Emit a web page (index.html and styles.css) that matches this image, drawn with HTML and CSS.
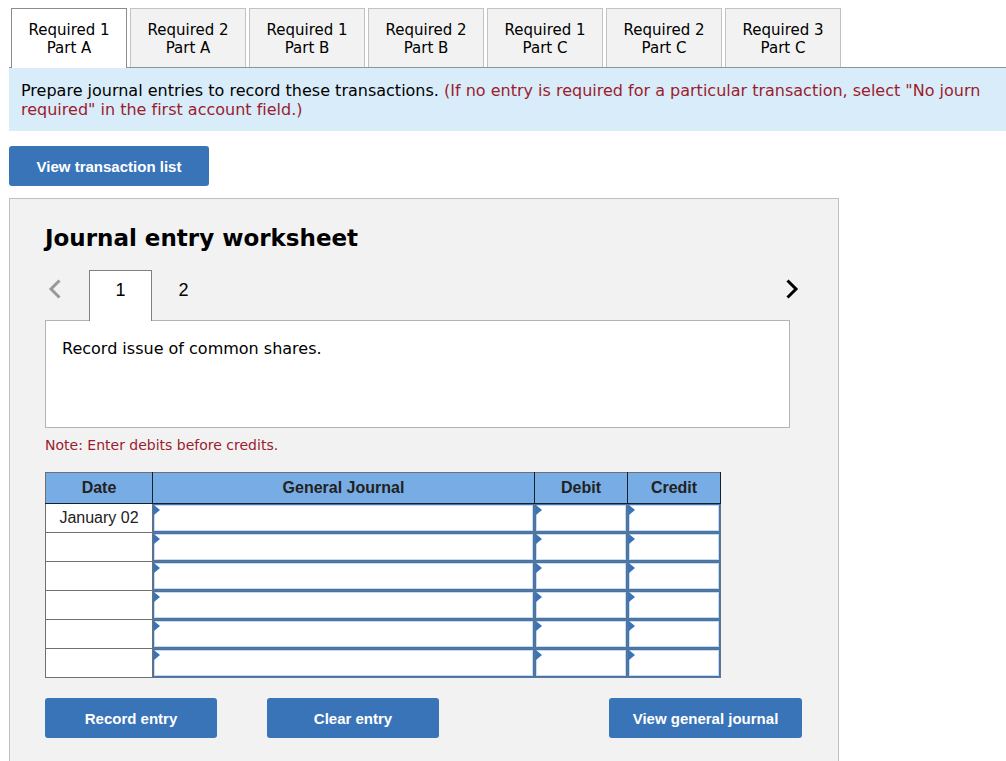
FILE: index.html
```html
<!DOCTYPE html>
<html lang="en">
<head>
<meta charset="utf-8">
<title>Journal entry worksheet</title>
<link rel="stylesheet" href="styles.css">
</head>
<body>
<nav class="tabs" role="tablist" aria-label="Requirements">
  <button class="tab tab-active" role="tab" aria-selected="true">Required 1<br>Part A</button>
  <button class="tab" role="tab" aria-selected="false">Required 2<br>Part A</button>
  <button class="tab" role="tab" aria-selected="false">Required 1<br>Part B</button>
  <button class="tab" role="tab" aria-selected="false">Required 2<br>Part B</button>
  <button class="tab" role="tab" aria-selected="false">Required 1<br>Part C</button>
  <button class="tab" role="tab" aria-selected="false">Required 2<br>Part C</button>
  <button class="tab" role="tab" aria-selected="false">Required 3<br>Part C</button>
</nav>
<p class="instructions">Prepare journal entries to record these transactions. <span class="hint">(If no entry is required for a particular transaction, select "No journ<br>required" in the first account field.)</span></p>
<main class="content">
  <button class="btn btn-list">View transaction list</button>
  <section class="worksheet">
    <h1 class="title">Journal entry worksheet</h1>
    <div class="pager">
      <button class="arrow arrow-prev" aria-label="Previous" disabled><svg width="14" height="20" viewBox="0 0 14 20"><path d="M11.500 1.500 3 10l8.500 8.500" fill="none" stroke="#999" stroke-width="3"/></svg></button>
      <button class="page page-active">1</button>
      <button class="page">2</button>
      <button class="arrow arrow-next" aria-label="Next"><svg width="14" height="20" viewBox="0 0 14 20"><path d="M2.500 1.500 11 10l-8.500 8.500" fill="none" stroke="#000" stroke-width="3"/></svg></button>
    </div>
    <div class="prompt">Record issue of common shares.</div>
    <p class="note">Note: Enter debits before credits.</p>
    <table class="journal">
      <colgroup><col class="col-date"><col class="col-journal"><col class="col-amount"><col class="col-amount"></colgroup>
      <thead>
        <tr><th scope="col">Date</th><th scope="col">General Journal</th><th scope="col">Debit</th><th scope="col">Credit</th></tr>
      </thead>
      <tbody>
        <tr><td>January 02</td><td class="entry"><input type="text" aria-label="General Journal, row 1"></td><td class="entry"><input type="text" aria-label="Debit, row 1"></td><td class="entry"><input type="text" aria-label="Credit, row 1"></td></tr>
        <tr><td></td><td class="entry"><input type="text" aria-label="General Journal, row 2"></td><td class="entry"><input type="text" aria-label="Debit, row 2"></td><td class="entry"><input type="text" aria-label="Credit, row 2"></td></tr>
        <tr><td></td><td class="entry"><input type="text" aria-label="General Journal, row 3"></td><td class="entry"><input type="text" aria-label="Debit, row 3"></td><td class="entry"><input type="text" aria-label="Credit, row 3"></td></tr>
        <tr><td></td><td class="entry"><input type="text" aria-label="General Journal, row 4"></td><td class="entry"><input type="text" aria-label="Debit, row 4"></td><td class="entry"><input type="text" aria-label="Credit, row 4"></td></tr>
        <tr><td></td><td class="entry"><input type="text" aria-label="General Journal, row 5"></td><td class="entry"><input type="text" aria-label="Debit, row 5"></td><td class="entry"><input type="text" aria-label="Credit, row 5"></td></tr>
        <tr><td></td><td class="entry"><input type="text" aria-label="General Journal, row 6"></td><td class="entry"><input type="text" aria-label="Debit, row 6"></td><td class="entry"><input type="text" aria-label="Credit, row 6"></td></tr>
      </tbody>
    </table>
    <div class="actions">
      <button class="btn btn-action">Record entry</button>
      <button class="btn btn-action btn-clear">Clear entry</button>
      <button class="btn btn-journal">View general journal</button>
    </div>
  </section>
</main>
</body>
</html>
```

FILE: styles.css
```css
* {
  box-sizing: border-box;
}

html {
  overflow: hidden;
}

body {
  margin: 8px 0 0 9px;
  background: #fff;
  color: #000;
  font-family: Verdana, "DejaVu Sans", sans-serif;
  font-size: 16px;
  font-variant-ligatures: none;
}

button {
  cursor: pointer;
}

.tabs {
  display: flex;
  gap: 3px;
  padding-left: 2px;
  border-bottom: 1px solid #8e9499;
}

.tab {
  width: 116px;
  padding: 12px 0 10px;
  border: 1px solid #c2c2c2;
  border-bottom: 0;
  background: #f2f2f2;
  color: #000;
  font-family: inherit;
  font-size: 15px;
  line-height: 18px;
}

.tab-active {
  margin-bottom: -1px;
  padding-bottom: 11px;
  border-color: #8c8c8c;
  background: #fff;
}

.instructions {
  margin: 0;
  padding: 13px 12px 12px;
  background: #d9ecf9;
  line-height: 19px;
  white-space: nowrap;
}

.hint {
  color: #9b1c2e;
}

.content {
  padding-top: 15px;
}

.btn {
  height: 40px;
  padding: 0;
  border: 0;
  border-radius: 3px;
  background: #3974b9;
  color: #fff;
  font-family: "Liberation Sans", Arial, sans-serif;
  font-size: 15px;
  font-weight: bold;
}

.btn-list {
  display: block;
  width: 200px;
}

.worksheet {
  max-width: 830px;
  margin-top: 12px;
  padding: 24px 36px 36px 35px;
  border: 1px solid #bfbfbf;
  background: #f2f2f2;
}

.title {
  margin: 0 0 17px;
  font-size: 23px;
  line-height: 30px;
}

.pager {
  display: flex;
  align-items: flex-start;
  margin-bottom: -1px;
}

.arrow {
  display: flex;
  align-items: center;
  height: 38px;
  padding: 0;
  border: 0;
  background: none;
}

.arrow-prev {
  width: 44px;
  padding-left: 3px;
}

.arrow-next {
  margin-left: auto;
  margin-right: 3px;
}

.page {
  width: 63px;
  height: 51px;
  padding: 0 0 12px;
  border: 1px solid transparent;
  border-bottom: 0;
  background: none;
  color: #000;
  font-family: "Liberation Sans", Arial, sans-serif;
  font-size: 18px;
}

.page-active {
  position: relative;
  border-color: #808080;
  background: #fff;
}

.prompt {
  min-height: 108px;
  margin-right: 12px;
  padding: 18px 16px;
  border: 1px solid #b3b3b3;
  background: #fff;
  line-height: 20px;
}

.note {
  margin: 8px 0 18px;
  color: #9b1c2e;
  font-size: 14px;
  line-height: 18px;
}

.journal {
  width: 100%;
  max-width: 676px;
  border-collapse: collapse;
  table-layout: fixed;
  background: #fff;
  font-family: "Liberation Sans", Arial, sans-serif;
  font-size: 16px;
  color: #222;
}

.col-date {
  width: 107px;
}

.col-amount {
  width: 93px;
}

.journal th {
  height: 31px;
  padding: 0;
  border: 1px solid #14202c;
  background: #78ace4;
}

.journal thead th {
  border-top-color: #707070;
}

.journal thead th:first-child {
  border-left-color: #707070;
}

.journal td {
  height: 29px;
  padding: 0;
  border: 1px solid #707070;
  text-align: center;
}

.journal .entry {
  position: relative;
  border-color: #5f7690;
}

.journal tbody tr:first-child td {
  border-top-color: #14202c;
}

.entry input {
  display: block;
  width: 100%;
  height: 28px;
  padding: 0 8px;
  border: 1px solid #4673a8;
  outline: 0;
  background: #fff;
  box-shadow: inset 0 0 0 1px #c4dcf5;
  font: inherit;
}

.entry::before {
  content: "";
  position: absolute;
  top: 1px;
  left: 1px;
  border: solid transparent;
  border-width: 5px 0 5px 6px;
  border-left-color: #3974b9;
}

.actions {
  display: flex;
  margin-top: 20px;
}

.btn-action {
  width: 172px;
}

.btn-clear {
  margin-left: 50px;
}

.btn-journal {
  width: 193px;
  margin-left: auto;
}
```
